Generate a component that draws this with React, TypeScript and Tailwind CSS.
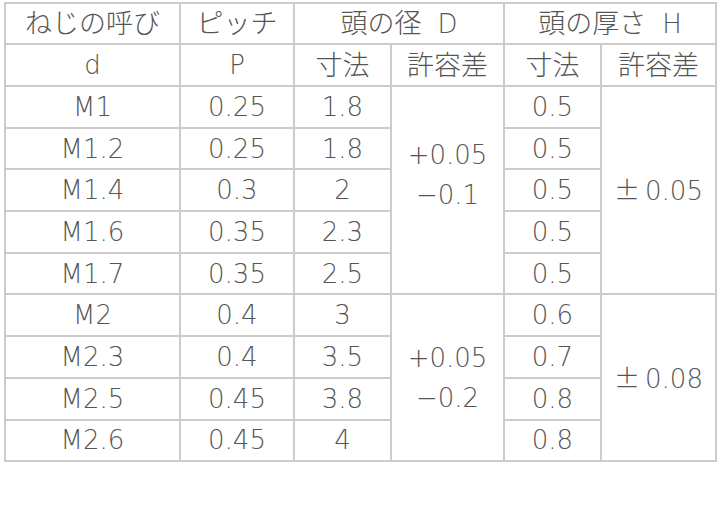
const rows = [
  { d: "M1", p: "0.25", dk: "1.8", hk: "0.5" },
  { d: "M1.2", p: "0.25", dk: "1.8", hk: "0.5" },
  { d: "M1.4", p: "0.3", dk: "2", hk: "0.5" },
  { d: "M1.6", p: "0.35", dk: "2.3", hk: "0.5" },
  { d: "M1.7", p: "0.35", dk: "2.5", hk: "0.5" },
  { d: "M2", p: "0.4", dk: "3", hk: "0.6" },
  { d: "M2.3", p: "0.4", dk: "3.5", hk: "0.7" },
  { d: "M2.5", p: "0.45", dk: "3.8", hk: "0.8" },
  { d: "M2.6", p: "0.45", dk: "4", hk: "0.8" },
];

const cell = "border-2 border-[#cccccc] text-center align-middle p-0 leading-none";
const cjk = { fontFamily: '"Noto Sans CJK JP", sans-serif' };

export default function App() {
  return (
    <div className="w-[720px] h-[505px] bg-white pt-[2px] pl-[4px]">
      <table
        className="border-collapse table-fixed w-[711px] text-[26px] font-extralight text-[#555555]"
        style={{ fontFamily: '"DejaVu Sans", "Noto Sans CJK JP", sans-serif' }}
      >
        <colgroup>
          <col className="w-[175px]" />
          <col className="w-[114px]" />
          <col className="w-[97px]" />
          <col className="w-[113px]" />
          <col className="w-[97px]" />
          <col className="w-[115px]" />
        </colgroup>
        <thead>
          <tr className="h-[41px]">
            <td className={cell}>
              <span className="text-[27px]">ねじの呼び</span>
            </td>
            <td className={cell}>
              <span className="text-[27px]">ピッチ</span>
            </td>
            <td className={cell} colSpan={2}>
              <span className="text-[27px]">頭の径</span>
              <span className="ml-[16px]">D</span>
            </td>
            <td className={cell} colSpan={2}>
              <span className="text-[27px]">頭の厚さ</span>
              <span className="ml-[16px]">H</span>
            </td>
          </tr>
          <tr className="h-[42px]">
            <td className={cell}>d</td>
            <td className={cell}>P</td>
            <td className={cell}>
              <span className="text-[27px]">寸法</span>
            </td>
            <td className={cell}>
              <span className="text-[27px]">許容差</span>
            </td>
            <td className={cell}>
              <span className="text-[27px]">寸法</span>
            </td>
            <td className={cell}>
              <span className="text-[27px]">許容差</span>
            </td>
          </tr>
        </thead>
        <tbody>
          {rows.map((r, i) => (
            <tr key={r.d} className="h-[41.7px]">
              <td className={cell}>{r.d}</td>
              <td className={cell}>{r.p}</td>
              <td className={cell}>{r.dk}</td>
              {i === 0 && (
                <td className={cell} rowSpan={5}>
                  <div className="pb-[30px]">
                    <div className="leading-[40px]">+0.05</div>
                    <div className="leading-[40px]">−0.1</div>
                  </div>
                </td>
              )}
              {i === 5 && (
                <td className={cell} rowSpan={4}>
                  <div className="leading-[40px]">+0.05</div>
                  <div className="leading-[40px]">−0.2</div>
                </td>
              )}
              <td className={cell}>{r.hk}</td>
              {i === 0 && (
                <td className={cell} rowSpan={5}>
                  <span className="mr-[5px]" style={cjk}>±</span>0.05
                </td>
              )}
              {i === 5 && (
                <td className={cell} rowSpan={4}>
                  <span className="mr-[5px]" style={cjk}>±</span>0.08
                </td>
              )}
            </tr>
          ))}
        </tbody>
      </table>
    </div>
  );
}
